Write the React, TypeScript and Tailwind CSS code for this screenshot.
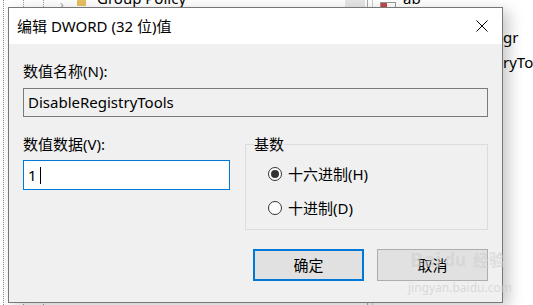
import React from "react";

function Radio({ checked, label }: { checked?: boolean; label: string }) {
  return (
    <div className="flex items-center h-[20px]">
      <span className="w-[14px] h-[14px] rounded-full border border-[#333] bg-white flex items-center justify-center">
        {checked && <span className="w-[8px] h-[8px] rounded-full bg-[#333]" />}
      </span>
      <span className="ml-[6px] text-[15px] leading-[20px] text-black">{label}</span>
    </div>
  );
}

export default function App() {
  return (
    <div className="relative w-[533px] h-[305px] overflow-hidden bg-white font-['Noto_Sans','Noto_Sans_CJK_SC',sans-serif] text-black">
      {/* background explorer window pieces */}
      <div className="absolute left-[3px] top-0 h-full border-l border-dotted border-[#888]" />
      <div className="absolute left-[23px] top-0 h-full border-l border-dotted border-[#999]" />
      <div className="absolute left-[43px] top-0 h-full border-l border-dotted border-[#999]" />
      <div className="absolute left-[60px] top-[-4px] text-[#999] text-[12px]">›</div>
      <div className="absolute left-[77px] top-0 w-[9px] h-[6px] bg-[#e8c060]" />
      <div className="absolute left-[97px] top-[-12px] text-[15px] leading-[20px]">Group Policy</div>
      <div className="absolute left-[345px] top-0 w-[20px] h-[8px] bg-[#e6e6e6]" />
      <div className="absolute left-[367px] top-0 h-full border-l border-[#aaa]" />
      <div className="absolute left-[372px] top-0 h-full border-l border-[#ccc]" />
      <div className="absolute left-[380px] top-[2px] w-[16px] h-[6px] border border-[#999] bg-white">
        <div className="w-[6px] h-[4px] bg-[#c44]" />
      </div>
      <div className="absolute left-[403px] top-[-12px] text-[15px] leading-[20px]">ab</div>
      <div className="absolute left-[503px] top-[27px] text-[15px] leading-[20px]">gr</div>
      <div className="absolute left-[503px] top-[52px] text-[15px] leading-[20px] whitespace-nowrap">ryTools</div>

      {/* dialog */}
      <div className="absolute left-[8px] top-[7px] w-[495px] h-[296px] border border-[#777] bg-[#f0f0f0] flex flex-col shadow-[6px_4px_14px_rgba(0,0,0,0.22)]">
        <div className="h-[36px] bg-white flex items-center justify-between pl-[8px] pr-[14px]">
          <span className="text-[15px] leading-[20px]">编辑 DWORD (32 位)值</span>
          <svg width="12" height="12" viewBox="0 0 12 12">
            <path d="M0.5 0.5 L11.5 11.5 M11.5 0.5 L0.5 11.5" stroke="#000" strokeWidth="1" />
          </svg>
        </div>
        <div className="flex flex-col px-[14px] pt-[17px]">
          <div className="text-[15px] leading-[20px]">数值名称(N):</div>
          <div className="mt-[7px] h-[29px] border border-[#7a7a7a] bg-[#f0f0f0] flex items-center pl-[4px] text-[15px]">
            DisableRegistryTools
          </div>
          <div className="mt-[17px] flex items-start gap-[15px]">
            <div className="flex flex-col w-[207px]">
              <div className="text-[15px] leading-[20px]">数值数据(V):</div>
              <div className="mt-[6px] h-[30px] border border-[#0078d7] bg-white flex items-center pl-[4px] text-[15px]">
                <span>1</span>
                <span className="ml-[3px] w-[1px] h-[17px] bg-black" />
              </div>
            </div>
            <fieldset className="flex-1 h-[96px] border border-[#dcdcdc] px-[8px] m-0">
              <legend className="px-0 text-[15px] leading-[20px]">基数</legend>
              <div className="pl-[14px] pt-[10px] flex flex-col gap-[14px]">
                <Radio checked label="十六进制(H)" />
                <Radio label="十进制(D)" />
              </div>
            </fieldset>
          </div>
          <div className="mt-[19px] flex justify-end gap-[13px]">
            <button className="w-[111px] h-[32px] border-2 border-[#0078d7] bg-[#e1e1e1] text-[15px]">确定</button>
            <button className="w-[111px] h-[32px] border border-[#adadad] bg-[#e1e1e1] text-[15px]">取消</button>
          </div>
        </div>
      </div>

      {/* watermark */}
      <div className="absolute left-[410px] top-[248px] flex items-end gap-[3px] leading-[24px] font-bold text-[#cfcfcf]/60 pointer-events-none">
        <span className="text-[20px]">Bai</span>
        <span className="text-[17px]">du</span>
        <span className="ml-[4px] text-[16px]">经验</span>
      </div>
      <div className="absolute left-[408px] top-[281px] text-[12px] leading-[14px] text-[#c8c8c8]/60 pointer-events-none">
        jingyan.baidu.com
      </div>
    </div>
  );
}
